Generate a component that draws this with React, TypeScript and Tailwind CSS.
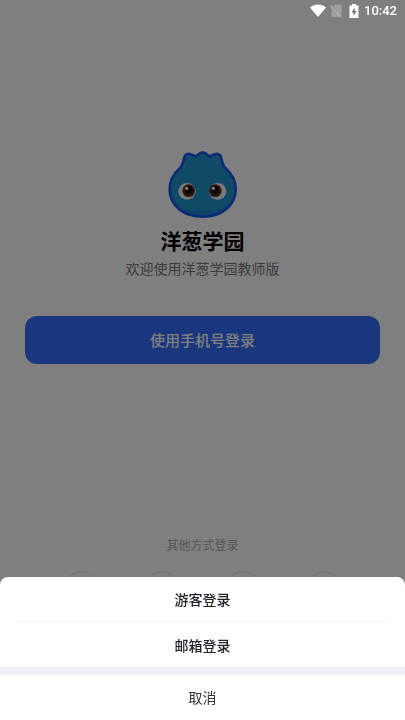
import React, { useState } from 'react';

const LOGIN_METHODS = ['微信登录', 'QQ登录', '密码登录', '更多登录方式'];

function StatusBar() {
  return (
    <div className="relative z-20 flex h-[22px] items-center justify-end gap-0.5 px-2 text-white">
      <svg className="h-4 w-4" viewBox="0 0 16 16" fill="currentColor" aria-hidden="true">
        <path d="M8 14 0 4.500C2.400 2.600 5.100 1.600 8 1.600s5.600 1 8 2.900z" />
      </svg>
      <svg className="h-4 w-4" viewBox="0 0 16 16" aria-hidden="true">
        <path d="M5 3.500 7 1.500h6.500v12zM3.500 5v9h9z" fill="#a0a0a0" />
        <path d="M2.500 2.500 13.500 14.500" stroke="#b4b4b4" strokeWidth="1.200" />
      </svg>
      <svg className="h-4 w-4" viewBox="0 0 16 16" aria-hidden="true">
        <path d="M6 1h4v1.500h2.500V15h-9V2.500H6z" fill="currentColor" />
        <path d="M8.700 4.500 5.500 9.500h2V13l3.200-5h-2z" fill="#777" />
      </svg>
      <span className="font-[Roboto,sans-serif] text-[13px] font-medium leading-4">10:42</span>
    </div>
  );
}

function OnionLogo() {
  return (
    <svg className="h-[70px] w-[71px]" viewBox="45 30 213 210" role="img" aria-label="洋葱学园">
      <path
        d="M152 230C96 230 53 197 53 148C53 121 65 101 82 86C95 75 94 57 99 47C104 38 120 43 131 49C138 48 141 37 152 37C163 37 166 48 173 49C184 43 200 38 205 47C210 57 209 75 222 86C239 101 251 121 251 148C251 197 208 230 152 230Z"
        fill="#2094cd"
      />
      <path d="M57 164C71 200 107 210 152 210S233 200 247 164C242 207 203 230 152 230S62 207 57 164Z" fill="#1c86d4" />
      <path
        d="M152 230C96 230 53 197 53 148C53 121 65 101 82 86C95 75 94 57 99 47C104 38 120 43 131 49C138 48 141 37 152 37C163 37 166 48 173 49C184 43 200 38 205 47C210 57 209 75 222 86C239 101 251 121 251 148C251 197 208 230 152 230Z"
        fill="none"
        stroke="#1057e8"
        strokeWidth="8"
        strokeLinejoin="round"
      />
      <ellipse cx="105" cy="154" rx="26" ry="25" fill="#f4f4f4" />
      <ellipse cx="197" cy="154" rx="26" ry="25" fill="#f4f4f4" />
      <circle cx="110" cy="152" r="19" fill="#5a2c20" />
      <circle cx="190" cy="152" r="19" fill="#5a2c20" />
      <circle cx="111" cy="151" r="12" fill="#1c0d0a" />
      <circle cx="189" cy="151" r="12" fill="#1c0d0a" />
      <circle cx="104" cy="145" r="5" fill="#fff" />
      <circle cx="184" cy="145" r="5" fill="#fff" />
    </svg>
  );
}

function ActionSheet({ onClose }: { onClose: () => void }) {
  return (
    <div className="fixed inset-0 z-10 flex flex-col justify-end bg-black/50">
      <div className="overflow-hidden rounded-t-lg bg-white text-sm text-[#20232b]" role="dialog" aria-label="其他登录方式">
        <div className="flex flex-col divide-y divide-[#f5f5f7] px-4">
          <button type="button" className="h-[45px] font-medium" onClick={onClose}>
            游客登录
          </button>
          <button type="button" className="h-[45px] font-medium" onClick={onClose}>
            邮箱登录
          </button>
        </div>
        <div className="h-2 bg-[#eff0f6]" />
        <button type="button" className="h-[45px] w-full pb-0.5 text-[#333]" onClick={onClose}>
          取消
        </button>
      </div>
    </div>
  );
}

export default function App() {
  const [sheetOpen, setSheetOpen] = useState(true);

  return (
    <div className="flex min-h-screen flex-col bg-white font-['Noto_Sans_CJK_SC',sans-serif]">
      <StatusBar />

      <main className="flex flex-1 flex-col px-[25px] pt-32">
        <div className="flex flex-col items-center">
          <OnionLogo />
          <h1 className="mt-2 text-[21px] font-bold leading-6 text-black">洋葱学园</h1>
          <p className="mt-1.5 text-sm leading-5 text-[#777]">欢迎使用洋葱学园教师版</p>
        </div>
        <button
          type="button"
          className="mt-[38px] h-12 w-full rounded-xl bg-[#346cff] text-[15px] font-medium text-white"
        >
          使用手机号登录
        </button>
      </main>

      <footer className="px-10 pb-[117px]">
        <p className="text-center text-xs leading-4 text-[#aaa]">其他方式登录</p>
        <div className="mt-[18px] grid grid-cols-4 justify-items-center">
          {LOGIN_METHODS.map((method) => (
            <button
              key={method}
              type="button"
              aria-label={method}
              className="h-8 w-8 rounded-full border border-[#e4e4e4]"
              onClick={() => setSheetOpen(true)}
            />
          ))}
        </div>
      </footer>

      {sheetOpen && <ActionSheet onClose={() => setSheetOpen(false)} />}
    </div>
  );
}
